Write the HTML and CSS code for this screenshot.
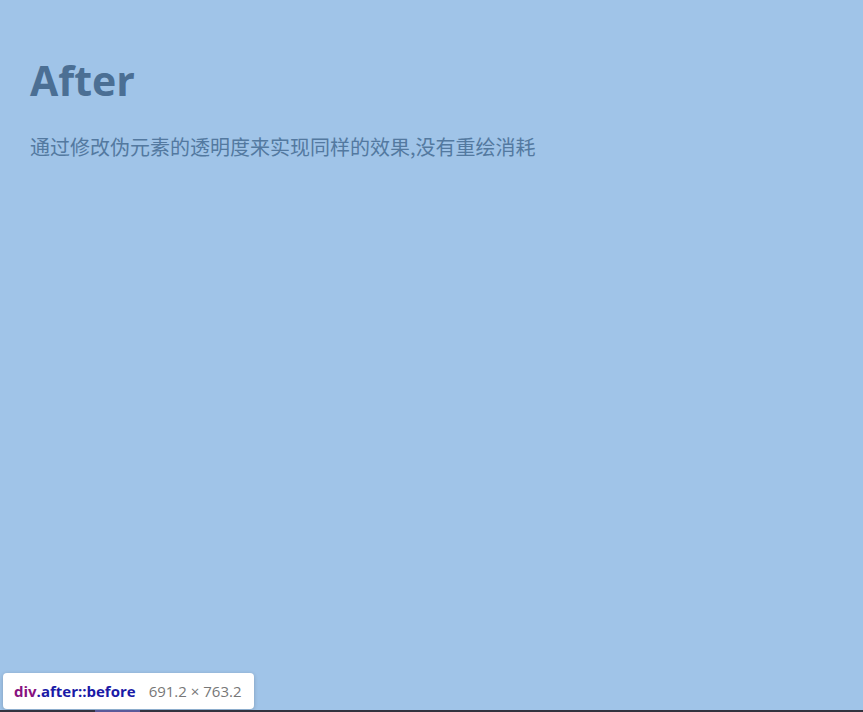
FILE: index.html
```html
<!DOCTYPE html>
<html lang="zh">
<head>
<meta charset="utf-8">
<title>After</title>
<link rel="stylesheet" href="styles.css">
</head>
<body>
<div class="after">
  <h1 class="title">After</h1>
  <p class="desc">通过修改伪元素的透明度来实现同样的效果,没有重绘消耗</p>
</div>
<div class="tooltip"><span class="tag">div</span><span class="cls">.after::before</span><span class="size">691.2 × 763.2</span></div>
<div class="bottom-bar"><div class="mark"></div></div>
</body>
</html>
```
FILE: styles.css
```css
html, body {
  margin: 0;
  padding: 0;
  height: 100%;
  overflow: hidden;
}
body {
  background: #a0c4e8;
  font-family: "Open Sans", "Noto Sans CJK SC", sans-serif;
}
.after {
  padding: 52px 30px 0;
}
.title {
  margin: 0;
  font-size: 41px;
  font-weight: 700;
  color: #4b6f94;
  line-height: 56px;
}
.desc {
  margin: 25px 0 0;
  font-size: 20px;
  color: #5379a0;
  font-family: "Noto Sans CJK SC", sans-serif;
  line-height: 28px;
}
.tooltip {
  position: absolute;
  left: 3px;
  top: 673px;
  height: 36px;
  width: 251px;
  box-sizing: border-box;
  background: #fff;
  border-radius: 4px;
  box-shadow: 0 1px 4px rgba(0,0,0,0.2);
  display: flex;
  align-items: center;
  padding-left: 11px;
  font-family: "Open Sans", sans-serif;
  font-size: 15px;
}
.tag { color: #881280; font-weight: 700; }
.cls { color: #1a1aa6; font-weight: 700; }
.size { color: #777; margin-left: 13px; }
.bottom-bar {
  position: absolute;
  left: 0;
  bottom: 0;
  width: 100%;
  height: 2px;
  background: #33333f;
}
.mark {
  margin-left: 95px;
  width: 45px;
  height: 2px;
  background: #5a5a9a;
}
```
